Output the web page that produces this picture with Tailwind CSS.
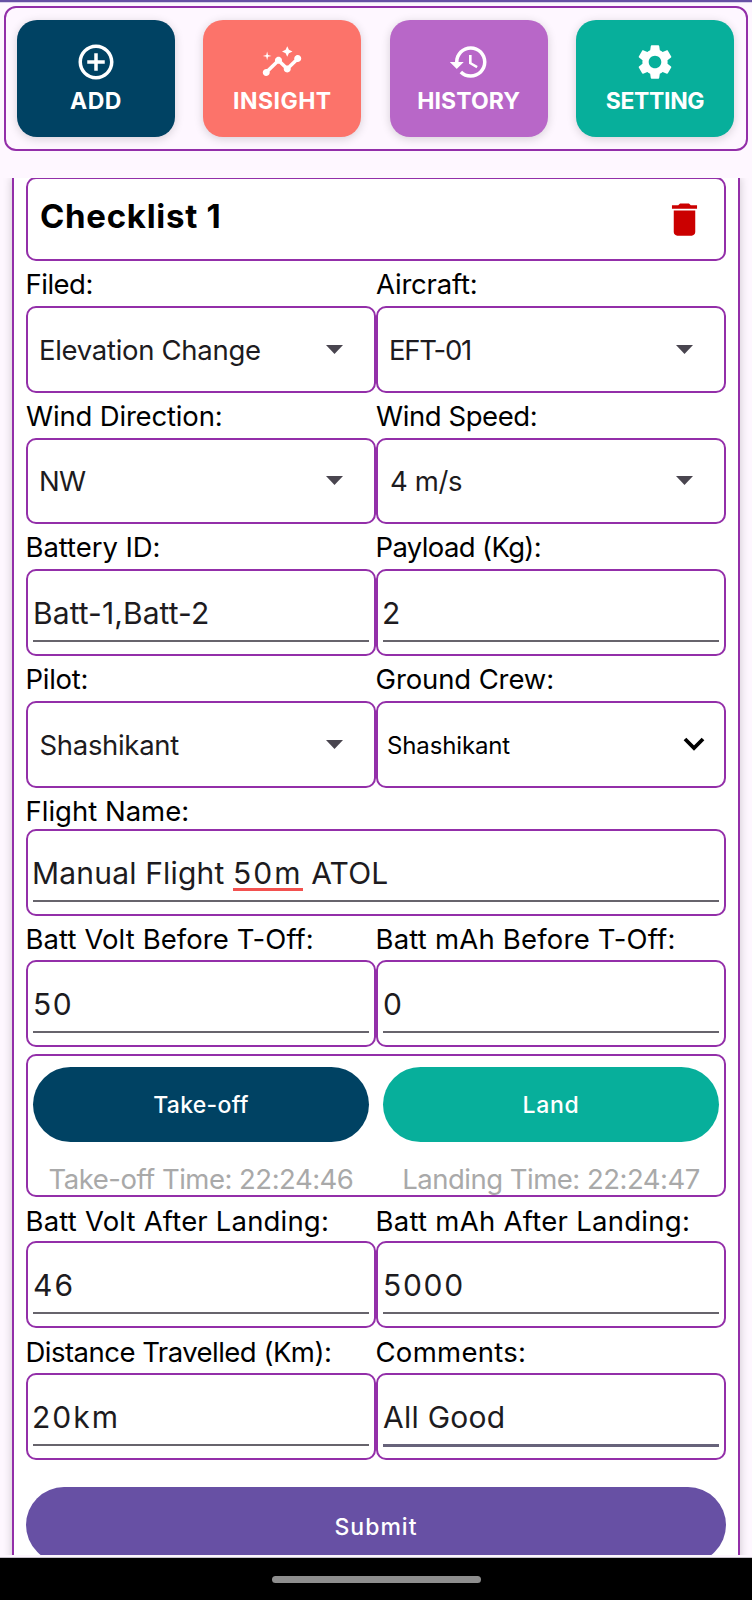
<!DOCTYPE html>
<html lang="en">
<head>
<meta charset="utf-8">
<title>Flight Checklist</title>
<script src="https://cdn.jsdelivr.net/npm/@tailwindcss/browser@4"></script>
</head>
<body class="bg-[#fef7ff] text-black font-['Inter','Open_Sans',sans-serif]">
<div class="flex h-[1600px] w-[752px] flex-col overflow-hidden">
  <div class="h-[3px] shrink-0 border-b border-[#d9d0ea] bg-[#6750a4]"></div>

  <!-- Top actions -->
  <nav class="mx-1 mt-[3px] flex h-[145px] shrink-0 justify-between rounded-xl border-2 border-[#932fa9] pr-[12px] pl-[11px] pt-3">
    <button class="flex h-[117px] w-[158px] flex-col items-center rounded-[20px] bg-[#004263] pt-[21px] text-white shadow-[0_2px_10px_rgba(0,0,0,0.16)]">
      <svg class="size-[42px]" viewBox="0 0 24 24" fill="currentColor"><path d="M13 7h-2v4H7v2h4v4h2v-4h4v-2h-4V7zm-1-5C6.48 2 2 6.48 2 12s4.480 10 10 10 10-4.480 10-10S17.520 2 12 2zm0 18c-4.410 0-8-3.590-8-8s3.590-8 8-8 8 3.590 8 8-3.590 8-8 8z"/></svg>
      <span class="mt-1 text-[23px] leading-7 font-bold tracking-[0.5px]">ADD</span>
    </button>
    <button class="flex h-[117px] w-[158px] flex-col items-center rounded-[20px] bg-[#fc736a] pt-[21px] text-white shadow-[0_2px_10px_rgba(0,0,0,0.16)]">
      <svg class="size-[42px]" viewBox="0 0 24 24" fill="currentColor"><path d="M21 8c-1.450 0-2.260 1.440-1.930 2.510l-3.550 3.560c-.3-.09-.74-.09-1.040 0l-2.550-2.550C12.270 10.450 11.460 9 10 9c-1.450 0-2.270 1.440-1.930 2.520l-4.560 4.550C2.440 15.740 1 16.550 1 18c0 1.100.9 2 2 2 1.450 0 2.260-1.440 1.930-2.510l4.550-4.560c.3.09.74.09 1.040 0l2.550 2.550C12.730 16.550 13.540 18 15 18c1.450 0 2.270-1.440 1.930-2.520l3.560-3.550C21.560 12.260 23 11.450 23 10c0-1.100-.9-2-2-2z"/><path d="M15 9l.94-2.070L18 6l-2.060-.93L15 3l-.92 2.070L12 6l2.080.93zM3.500 11L4 9l2-.5L4 8l-.5-2L3 8l-2 .5L3 9z"/></svg>
      <span class="mt-1 text-[23px] leading-7 font-bold tracking-[0.5px]">INSIGHT</span>
    </button>
    <button class="flex h-[117px] w-[158px] flex-col items-center rounded-[20px] bg-[#b867c8] pt-[21px] text-white shadow-[0_2px_10px_rgba(0,0,0,0.16)]">
      <svg class="size-[42px]" viewBox="0 0 24 24" fill="currentColor"><path d="M13 3c-4.970 0-9 4.030-9 9H1l3.890 3.890.07.14L9 12H6c0-3.870 3.130-7 7-7s7 3.130 7 7-3.130 7-7 7c-1.930 0-3.680-.79-4.940-2.060l-1.420 1.420C8.270 19.990 10.510 21 13 21c4.970 0 9-4.030 9-9s-4.030-9-9-9zm-1 5v5l4.280 2.540.72-1.210-3.500-2.080V8H12z"/></svg>
      <span class="mt-1 text-[23px] leading-7 font-bold tracking-[0.1px]">HISTORY</span>
    </button>
    <button class="flex h-[117px] w-[158px] flex-col items-center rounded-[20px] bg-[#07af9b] pt-[21px] text-white shadow-[0_2px_10px_rgba(0,0,0,0.16)]">
      <svg class="size-[42px]" viewBox="0 0 24 24" fill="currentColor"><path d="M19.140 12.940c.04-.3.06-.61.06-.94 0-.32-.02-.64-.07-.94l2.030-1.580c.18-.14.23-.41.12-.61l-1.920-3.320c-.12-.22-.37-.29-.59-.22l-2.390.96c-.5-.38-1.030-.7-1.620-.94l-.36-2.540c-.04-.24-.24-.41-.48-.41h-3.840c-.24 0-.43.17-.47.41l-.36 2.540c-.59.24-1.130.57-1.620.94l-2.390-.96c-.22-.08-.47 0-.59.22L2.740 8.870c-.12.21-.08.47.12.61l2.030 1.580c-.05.3-.09.63-.09.94s.02.64.07.94l-2.030 1.580c-.18.14-.23.41-.12.61l1.920 3.320c.12.22.37.29.59.22l2.390-.96c.5.38 1.030.7 1.620.94l.36 2.540c.05.24.24.41.48.41h3.840c.24 0 .44-.17.47-.41l.36-2.540c.59-.24 1.130-.56 1.620-.94l2.390.96c.22.08.47 0 .59-.22l1.920-3.320c.12-.22.07-.47-.12-.61l-2.010-1.580zM12 15.600c-1.980 0-3.600-1.620-3.600-3.600s1.620-3.600 3.600-3.600 3.600 1.620 3.600 3.600-1.620 3.600-3.600 3.600z"/></svg>
      <span class="mt-1 text-[23px] leading-7 font-bold tracking-[-0.35px]">SETTING</span>
    </button>
  </nav>

  <!-- Scrolling form -->
  <main class="mt-[27px] h-[1377px] shrink-0 overflow-hidden px-3">
    <div class="h-[1420px] border-x-2 border-[#932fa9] bg-white px-3 shadow-[0_0_9px_rgba(0,0,0,0.2)]">
      <div class="-mt-px flex h-[83.500px] items-start justify-between rounded-[10px] border-2 border-[#932fa9] pr-[18px] pl-[12px]">
        <h1 class="mt-[17px] text-[33px] leading-10 font-bold tracking-[0.700px]">Checklist 1</h1>
        <svg class="mt-[19px] size-[43px]" viewBox="0 0 24 24" fill="#cb0000"><path d="M6 19c0 1.100.9 2 2 2h8c1.100 0 2-.9 2-2V7H6v12zM19 4h-3.500l-1-1h-5l-1 1H5v2h14V4z"/></svg>
      </div>

      <div class="mt-[0.700px] grid grid-cols-2 text-[27.500px]">
        <div>
          <div class="-ml-[0.500px] h-[44.800px] pt-[3px] leading-10 tracking-[-0.500px]">Filed:</div>
          <div class="flex h-[86.800px] items-center justify-between rounded-[10px] border-2 border-[#932fa9] pr-[31px] pl-[11px] text-[#1d1b20]"><span class="pt-[2px] tracking-[-0.300px]">Elevation Change</span><svg class="h-[9px] w-[17px]" viewBox="0 0 17 9" fill="#49454f"><path d="M0 0h17L8.500 9z"/></svg></div>
        </div>
        <div>
          <div class="h-[44.800px] pt-[3px] leading-10 tracking-[-0.200px]">Aircraft:</div>
          <div class="flex h-[86.800px] items-center justify-between rounded-[10px] border-2 border-[#932fa9] pr-[31px] pl-[11px] text-[#1d1b20]"><span class="pt-[2px] tracking-[-1.300px]">EFT-01</span><svg class="h-[9px] w-[17px]" viewBox="0 0 17 9" fill="#49454f"><path d="M0 0h17L8.500 9z"/></svg></div>
        </div>
        <div>
          <div class="h-[44.800px] pt-[3px] leading-10 tracking-[-0.170px]">Wind Direction:</div>
          <div class="flex h-[86.800px] items-center justify-between rounded-[10px] border-2 border-[#932fa9] pr-[31px] pl-[11px] text-[#1d1b20]"><span class="pt-[2px] tracking-[-0.700px]">NW</span><svg class="h-[9px] w-[17px]" viewBox="0 0 17 9" fill="#49454f"><path d="M0 0h17L8.500 9z"/></svg></div>
        </div>
        <div>
          <div class="h-[44.800px] pt-[3px] leading-10 tracking-[-0.430px]">Wind Speed:</div>
          <div class="flex h-[86.800px] items-center justify-between rounded-[10px] border-2 border-[#932fa9] pr-[31px] pl-[12px] text-[#1d1b20]"><span class="pt-[2px] tracking-[-0.370px]">4 m/s</span><svg class="h-[9px] w-[17px]" viewBox="0 0 17 9" fill="#49454f"><path d="M0 0h17L8.500 9z"/></svg></div>
        </div>
        <div>
          <div class="-ml-[0.500px] h-[44.800px] pt-[3px] leading-10 tracking-[-0.070px]">Battery ID:</div>
          <div class="flex h-[86.800px] flex-col rounded-[10px] border-2 border-[#932fa9] px-[5px] pt-[22px] text-[30px] leading-10 text-[#1d1b20]"><span class="h-[47px] tracking-[0.080px]">Batt-1,Batt-2</span><span class="h-[2px] shrink-0 bg-[#67646c]"></span></div>
        </div>
        <div>
          <div class="-ml-[0.500px] h-[44.800px] pt-[3px] leading-10 tracking-[-0.640px]">Payload (Kg):</div>
          <div class="flex h-[86.800px] flex-col rounded-[10px] border-2 border-[#932fa9] px-[5px] pt-[22px] text-[30px] leading-10 text-[#1d1b20]"><span class="-ml-px h-[47px]">2</span><span class="h-[2px] shrink-0 bg-[#67646c]"></span></div>
        </div>
        <div>
          <div class="-ml-[0.500px] h-[44.800px] pt-[3px] leading-10 tracking-[-0.270px]">Pilot:</div>
          <div class="flex h-[86.800px] items-center justify-between rounded-[10px] border-2 border-[#932fa9] pr-[31px] pl-[11.500px] text-[#1d1b20]"><span class="pt-[2px] tracking-[-0.320px]">Shashikant</span><svg class="h-[9px] w-[17px]" viewBox="0 0 17 9" fill="#49454f"><path d="M0 0h17L8.500 9z"/></svg></div>
        </div>
        <div>
          <div class="-ml-[0.500px] h-[44.800px] pt-[3px] leading-10 tracking-[-0.120px]">Ground Crew:</div>
          <div class="flex h-[86.800px] items-center justify-between rounded-[10px] border-2 border-[#932fa9] pr-[19px] pl-[9px]"><span class="pt-[3px] text-2xl tracking-[-0.140px]">Shashikant</span><svg class="h-[14px] w-[22px]" viewBox="0 0 22 14" fill="none" stroke="#000" stroke-width="3.800"><path d="M2 2l9 9 9-9"/></svg></div>
        </div>
      </div>

      <div class="text-[27.500px]">
        <div class="-ml-[0.500px] h-[41px] pt-[3px] leading-10">Flight Name:</div>
        <div class="flex h-[87px] flex-col rounded-[10px] border-2 border-[#932fa9] px-[5px] pt-[22px] text-[30px] leading-10 text-[#1d1b20]"><span class="-ml-px h-[47px] tracking-[0.180px]">Manual Flight <span class="relative tracking-[2px]">50m<span class="absolute bottom-0 left-0 h-[3px] w-full bg-[#f2514f]"></span></span> ATOL</span><span class="h-[2px] shrink-0 bg-[#67646c]"></span></div>
      </div>

      <div class="grid grid-cols-2 text-[27.500px]">
        <div>
          <div class="-ml-[0.500px] h-[44.800px] pt-[3px] leading-10 tracking-[0.080px]">Batt Volt Before T-Off:</div>
          <div class="flex h-[86.800px] flex-col rounded-[10px] border-2 border-[#932fa9] px-[5px] pt-[22px] text-[30px] leading-10 text-[#1d1b20]"><span class="h-[47px] tracking-[1.500px]">50</span><span class="h-[2px] shrink-0 bg-[#67646c]"></span></div>
        </div>
        <div>
          <div class="-ml-[0.500px] h-[44.800px] pt-[3px] leading-10 tracking-[0.200px]">Batt mAh Before T-Off:</div>
          <div class="flex h-[86.800px] flex-col rounded-[10px] border-2 border-[#932fa9] px-[5px] pt-[22px] text-[30px] leading-10 text-[#1d1b20]"><span class="h-[47px]">0</span><span class="h-[2px] shrink-0 bg-[#67646c]"></span></div>
        </div>
      </div>

      <section class="mt-[6.500px] grid h-[143px] grid-cols-2 gap-x-[14px] rounded-[10px] border-2 border-[#932fa9] px-[5px] pt-[11px] text-center">
        <div>
          <button class="h-[75px] w-full rounded-full bg-[#004263] pt-0.5 text-[23px] font-medium tracking-[0.270px] text-white">Take-off</button>
          <div class="mt-[22px] whitespace-nowrap text-[27.500px] leading-[30px] tracking-[-0.500px] text-[#a9a9a9]">Take-off Time: 22:24:46</div>
        </div>
        <div>
          <button class="h-[75px] w-full rounded-full bg-[#07af9b] pt-0.5 text-[23px] font-medium tracking-[0.700px] text-white">Land</button>
          <div class="mt-[22px] whitespace-nowrap text-[27.500px] leading-[30px] tracking-[-0.500px] text-[#a9a9a9]">Landing Time: 22:24:47</div>
        </div>
      </section>

      <div class="grid grid-cols-2 text-[27.500px]">
        <div>
          <div class="-ml-[0.500px] h-[44.800px] pt-[4px] leading-10 tracking-[0.180px]">Batt Volt After Landing:</div>
          <div class="flex h-[86.800px] flex-col rounded-[10px] border-2 border-[#932fa9] px-[5px] pt-[22px] text-[30px] leading-10 text-[#1d1b20]"><span class="h-[47px] tracking-[2px]">46</span><span class="h-[2px] shrink-0 bg-[#67646c]"></span></div>
        </div>
        <div>
          <div class="-ml-[0.500px] h-[44.800px] pt-[4px] leading-10 tracking-[0.270px]">Batt mAh After Landing:</div>
          <div class="flex h-[86.800px] flex-col rounded-[10px] border-2 border-[#932fa9] px-[5px] pt-[22px] text-[30px] leading-10 text-[#1d1b20]"><span class="h-[47px] tracking-[1.700px]">5000</span><span class="h-[2px] shrink-0 bg-[#67646c]"></span></div>
        </div>
        <div>
          <div class="-ml-[0.500px] h-[44.800px] pt-[4px] leading-10 tracking-[-0.520px] whitespace-nowrap">Distance Travelled (Km):</div>
          <div class="flex h-[86.800px] flex-col rounded-[10px] border-2 border-[#932fa9] px-[5px] pt-[22px] text-[30px] leading-10 text-[#1d1b20]"><span class="-ml-px h-[47px] tracking-[2px]">20km</span><span class="h-[2px] shrink-0 bg-[#67646c]"></span></div>
        </div>
        <div>
          <div class="-ml-[0.500px] h-[44.800px] pt-[4px] leading-10 tracking-[0.280px]">Comments:</div>
          <div class="flex h-[86.800px] flex-col rounded-[10px] border-2 border-[#932fa9] px-[5px] pt-[22px] text-[30px] leading-10 text-[#1d1b20]"><span class="h-[47px] tracking-[0.250px]">All Good</span><span class="h-[3px] shrink-0 bg-[#67637a]"></span></div>
        </div>
      </div>

      <button class="mt-[27.500px] h-[76px] w-full rounded-full bg-[#6750a4] pt-[3px] text-[23px] font-medium tracking-[1px] text-white">Submit</button>
    </div>
  </main>

  <!-- System navigation bar -->
  <footer class="mt-[2px] flex grow items-start justify-center border-t border-[#c4c0c8] bg-black pt-[18px]">
    <div class="h-[7px] w-[209px] rounded-full bg-[#8e8e8e]"></div>
  </footer>
</div>
</body>
</html>
